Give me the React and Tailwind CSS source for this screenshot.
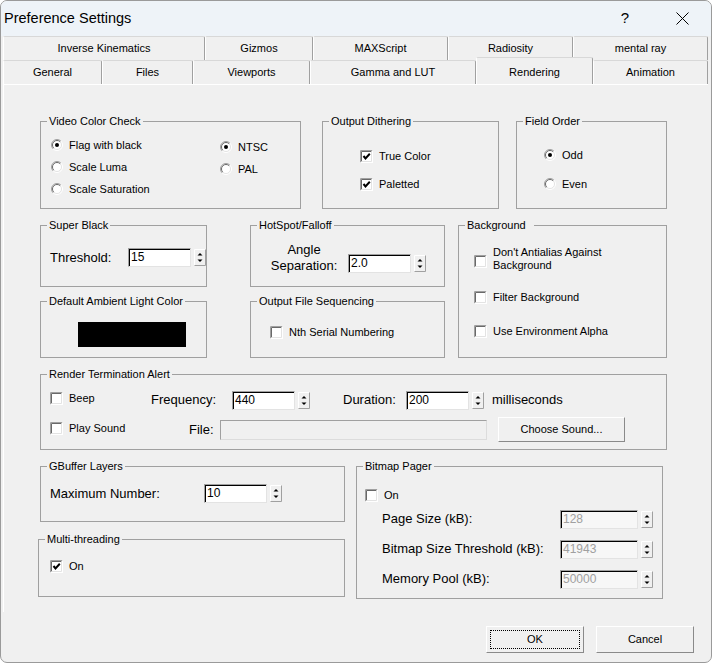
import React from "react";

function Radio({ checked }) {
  return (
    <svg width="12" height="12" viewBox="0 0 12 12" className="shrink-0">
      <circle cx="6" cy="6" r="5" fill="#fff" />
      <path d="M2.1 9.9 A5.5 5.5 0 0 1 9.9 2.1" fill="none" stroke="#a0a0a0" />
      <path d="M9.9 2.1 A5.5 5.5 0 0 1 2.1 9.9" fill="none" stroke="#ffffff" />
      <path d="M2.8 9.2 A4.5 4.5 0 0 1 9.2 2.8" fill="none" stroke="#696969" />
      <path d="M9.2 2.8 A4.5 4.5 0 0 1 2.8 9.2" fill="none" stroke="#e3e3e3" />
      {checked && <circle cx="6" cy="6" r="2" fill="#000" />}
    </svg>
  );
}

function Check({ checked }) {
  return (
    <svg width="13" height="13" viewBox="0 0 13 13" className="shrink-0">
      <rect x="0" y="0" width="13" height="13" fill="#fff" />
      <path d="M0.5 12.5V0.5H12.5" fill="none" stroke="#a0a0a0" />
      <path d="M1.5 11.5V1.5H11.5" fill="none" stroke="#696969" />
      <path d="M0.5 12.5H12.5V0.5" fill="none" stroke="#ffffff" />
      <path d="M1.5 11.5H11.5V1.5" fill="none" stroke="#e3e3e3" />
      {checked && (
        <path d="M3.5 6 L5.5 8.4 L9.8 3.8" fill="none" stroke="#000" strokeWidth="2" />
      )}
    </svg>
  );
}

function Spin({ className = "" }) {
  return (
    <svg width="12" height="17" viewBox="0 0 12 17" className={`shrink-0 ${className}`}>
      <rect x="0" y="0" width="12" height="17" fill="#f0f0f0" />
      <path d="M0.5 16.5V0.5H11.5" fill="none" stroke="#ffffff" />
      <path d="M0.5 16.5H11.5V0.5" fill="none" stroke="#a0a0a0" />
      <path d="M3.5 6.5H8.5L6 4Z" fill="#000" />
      <path d="M3.5 10.5H8.5L6 13Z" fill="#000" />
    </svg>
  );
}

function Field({ value, className = "", disabled }) {
  return (
    <div
      className={`h-[19px] shrink-0 border border-t-[#a0a0a0] border-l-[#a0a0a0] border-r-[#e3e3e3] border-b-[#e3e3e3] shadow-[inset_1px_1px_0_#000] pl-[2px] pt-[1px] text-[12px] leading-[14px] ${
        disabled ? "bg-[#f7f7f7] text-[#a0a0a0]" : "bg-white text-black"
      } ${className}`}
    >
      {value}
    </div>
  );
}

function Group({ label, className = "", labelClass = "", children }) {
  return (
    <div className={`relative shrink-0 border border-[#a0a0a0] ${className}`}>
      <span
        className={`absolute left-[6px] top-[-8px] bg-[#f0f0f0] px-[2px] text-[11px] leading-[14px] whitespace-nowrap ${labelClass}`}
      >
        {label}
      </span>
      {children}
    </div>
  );
}

function RadioRow({ checked, label }) {
  return (
    <div className="h-[22px] flex items-center gap-[6px] text-[11px]">
      <Radio checked={checked} />
      <span>{label}</span>
    </div>
  );
}

function CheckRow({ checked, label, className = "" }) {
  return (
    <div className={`h-[22px] flex items-center gap-[6px] text-[11px] ${className}`}>
      <Check checked={checked} />
      <span>{label}</span>
    </div>
  );
}

function Button({ children, className = "", focus }) {
  return (
    <div
      className={`relative shrink-0 flex items-center justify-center bg-[#f0f0f0] border border-t-white border-l-white border-r-[#8a8a8a] border-b-[#8a8a8a] text-[11px] ${className}`}
    >
      {focus && (
        <span className="absolute inset-[3px] border border-dotted border-black" />
      )}
      <span className="relative">{children}</span>
    </div>
  );
}

const row1 = [
  ["Inverse Kinematics", "w-[202px]"],
  ["Gizmos", "w-[108px]"],
  ["MAXScript", "w-[135px]"],
  ["Radiosity", "w-[125px]"],
  ["mental ray", "w-[135px]"],
];

const row2 = [
  ["General", "w-[99px]"],
  ["Files", "w-[91px]"],
  ["Viewports", "w-[117px]"],
  ["Gamma and LUT", "w-[166px]"],
  ["Rendering", "w-[117px]", true],
  ["Animation", "w-[115px]"],
];

function Tab({ label, w, active }) {
  return (
    <div
      className={`${w} shrink-0 flex items-center justify-center border-t border-l border-r border-t-[#d8d8d8] border-l-white border-r-[#a0a0a0] rounded-t-[2px] bg-[#f0f0f0] text-[11px] ${
        active ? "relative z-10 h-[27px] -mt-[2px] pt-[2px]" : "h-[24px]"
      }`}
    >
      {label}
    </div>
  );
}

export default function App() {
  return (
    <div className="w-[712px] h-[663px] overflow-hidden bg-[#f0f0f0] border border-[#9a9a9a] rounded-[7px] text-black font-['Liberation_Sans',Arial,sans-serif]">
      {/* Title bar */}
      <div className="h-[35px] bg-[#eef3f8] flex items-center pl-[3px]">
        <span className="text-[14.5px]">Preference Settings</span>
        <div className="ml-auto w-[46px] h-[35px] flex items-center justify-center text-[15px]">
          ?
        </div>
        <div className="ml-[11px] mr-[6px] w-[46px] h-[35px] flex items-center justify-center">
          <svg width="13" height="13" viewBox="0 0 13 13">
            <path d="M0.5 0.5 L12.5 12.5 M12.5 0.5 L0.5 12.5" stroke="#000" strokeWidth="1" />
          </svg>
        </div>
      </div>

      {/* Tabs */}
      <div className="ml-[2px] w-[705px]">
        <div className="flex h-[24px]">
          {row1.map(([l, w]) => (
            <Tab key={l} label={l} w={w} />
          ))}
        </div>
        <div className="flex h-[24px] items-end">
          {row2.map(([l, w, a]) => (
            <Tab key={l} label={l} w={w} active={a} />
          ))}
        </div>

        {/* Panel */}
        <div className="h-[528px] border-t border-l border-t-white border-l-white pl-[36px] pt-[36px] flex flex-col gap-[16px]">
          {/* Row 1 */}
          <div className="flex">
            <Group label="Video Color Check" className="w-[261px] h-[88px]">
              <div className="flex pl-[10px]">
                <div className="w-[169px] pt-[12px] flex flex-col">
                  <RadioRow checked label="Flag with black" />
                  <RadioRow label="Scale Luma" />
                  <RadioRow label="Scale Saturation" />
                </div>
                <div className="pt-[14px] flex flex-col">
                  <RadioRow checked label="NTSC" />
                  <RadioRow label="PAL" />
                </div>
              </div>
            </Group>
            <Group label="Output Dithering" className="ml-[21px] w-[177px] h-[88px]">
              <div className="pl-[37px] pt-[23px] flex flex-col gap-[6px]">
                <CheckRow checked label="True Color" />
                <CheckRow checked label="Paletted" />
              </div>
            </Group>
            <Group label="Field Order" className="ml-[17px] w-[151px] h-[88px]">
              <div className="pl-[27px] pt-[22px] flex flex-col gap-[7px]">
                <RadioRow checked label="Odd" />
                <RadioRow label="Even" />
              </div>
            </Group>
          </div>

          {/* Row 2 */}
          <div className="flex">
            <div className="w-[167px] flex flex-col gap-[14px]">
              <Group label="Super Black" className="h-[62px]">
                <div className="flex items-center pl-[9px] pt-[22px]">
                  <span className="w-[80px] text-[13px]">Threshold:</span>
                  <Field value="15" className="w-[63px]" />
                  <Spin className="ml-[3px]" />
                </div>
              </Group>
              <Group label="Default Ambient Light Color" className="h-[57px]">
                <div className="pl-[37px] pt-[20px]">
                  <div className="w-[108px] h-[25px] bg-black" />
                </div>
              </Group>
            </div>
            <div className="ml-[43px] w-[195px] flex flex-col gap-[14px]">
              <Group label="HotSpot/Falloff" className="h-[62px]">
                <div className="flex items-end pl-[18px] pt-[16px]">
                  <div className="w-[70px] text-center text-[13px] leading-[16px]">
                    Angle
                    <br />
                    Separation:
                  </div>
                  <div className="ml-[9px] mb-[1px] flex items-center">
                    <Field value="2.0" className="w-[63px]" />
                    <Spin className="ml-[3px]" />
                  </div>
                </div>
              </Group>
              <Group label="Output File Sequencing" className="h-[57px]">
                <div className="pl-[19px] pt-[19px]">
                  <CheckRow label="Nth Serial Numbering" />
                </div>
              </Group>
            </div>
            <Group
              label="Background"
              labelClass="pr-[8px]"
              className="ml-[13px] w-[209px] h-[133px]"
            >
              <div className="pl-[15px] pt-[19px] flex flex-col">
                <div className="h-[32px] flex items-center gap-[6px] text-[11px]">
                  <Check />
                  <span className="leading-[13px] -mt-[5px]">
                    Don't Antialias Against
                    <br />
                    Background
                  </span>
                </div>
                <CheckRow className="mt-[9px]" label="Filter Background" />
                <CheckRow className="mt-[12px]" label="Use Environment Alpha" />
              </div>
            </Group>
          </div>

          {/* Row 3 */}
          <Group label="Render Termination Alert" className="w-[627px] h-[76px]">
            <div className="pl-[9px] pt-[15px] flex flex-col gap-[7px]">
              <div className="h-[20px] flex items-center">
                <div className="w-[101px] flex items-center gap-[6px] text-[11px] -mt-[3px]">
                  <Check />
                  <span>Beep</span>
                </div>
                <span className="w-[81px] text-[13px]">Frequency:</span>
                <Field value="440" className="w-[63px]" />
                <Spin className="ml-[3px]" />
                <span className="ml-[33px] w-[63px] text-[13px]">Duration:</span>
                <Field value="200" className="w-[63px]" />
                <Spin className="ml-[3px]" />
                <span className="ml-[8px] text-[13px]">milliseconds</span>
              </div>
              <div className="h-[26px] flex items-center">
                <div className="w-[139px] flex items-center gap-[6px] text-[11px] -mt-[3px]">
                  <Check />
                  <span>Play Sound</span>
                </div>
                <span className="w-[31px] text-[13px]">File:</span>
                <div className="w-[267px] h-[20px] shrink-0 border border-t-[#a0a0a0] border-l-[#a0a0a0] border-r-[#dcdcdc] border-b-[#dcdcdc] bg-[#f0f0f0]" />
                <Button className="ml-[11px] w-[127px] h-[25px] -mt-[2px]">
                  Choose Sound...
                </Button>
              </div>
            </div>
          </Group>

          {/* Row 4 */}
          <div className="flex">
            <div className="w-[305px] flex flex-col gap-[17px]">
              <Group label="GBuffer Layers" className="w-[305px] h-[56px]">
                <div className="flex items-center pl-[9px] pt-[17px]">
                  <span className="w-[154px] text-[13px]">Maximum Number:</span>
                  <Field value="10" className="w-[63px]" />
                  <Spin className="ml-[3px]" />
                </div>
              </Group>
              <Group label="Multi-threading" className="-ml-[2px] w-[307px] h-[58px]">
                <div className="pl-[11px] pt-[15px]">
                  <CheckRow checked label="On" />
                </div>
              </Group>
            </div>
            <Group label="Bitmap Pager" className="ml-[11px] w-[307px] h-[133px]">
              <div className="pl-[8px] pt-[17px] flex flex-col">
                <CheckRow label="On" />
                <div className="pl-[17px] mt-[3px] flex flex-col gap-[10px]">
                  {[
                    ["Page Size (kB):", "128"],
                    ["Bitmap Size Threshold (kB):", "41943"],
                    ["Memory Pool (kB):", "50000"],
                  ].map(([l, v]) => (
                    <div key={l} className="h-[20px] flex items-center">
                      <span className="w-[178px] text-[13px]">{l}</span>
                      <Field disabled value={v} className="w-[78px]" />
                      <Spin className="ml-[3px]" />
                    </div>
                  ))}
                </div>
              </div>
            </Group>
          </div>
        </div>
      </div>

      {/* Buttons */}
      <div className="flex justify-end gap-[12px] pr-[17px] mt-[14px]">
        <Button focus className="w-[98px] h-[27px]">
          OK
        </Button>
        <Button className="w-[98px] h-[27px]">Cancel</Button>
      </div>
    </div>
  );
}
